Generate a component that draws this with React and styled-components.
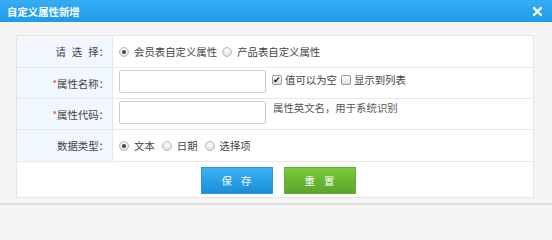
import React from 'react';
import styled, { createGlobalStyle } from 'styled-components';

const GlobalStyle = createGlobalStyle`
  html, body {
    margin: 0;
    padding: 0;
    background: #f5f5f5;
  }
  body {
    font-family: "Microsoft YaHei", "Noto Sans CJK SC", "Liberation Sans", sans-serif;
    font-size: 10.4px;
    color: #333;
  }
`;

const Dialog = styled.div`
  width: 552px;
  height: 205px;
  background: #f5f5f5;
  box-sizing: border-box;
  border-bottom: 2px solid #dcdcdc;
  display: flex;
  flex-direction: column;
`;

const TitleBar = styled.div`
  height: 22px;
  flex: none;
  background: linear-gradient(#36adf4, #1e9be8);
  display: flex;
  align-items: center;
  justify-content: space-between;
  padding: 0 9px 0 7px;
`;

const Title = styled.div`
  color: #fff;
  font-weight: bold;
  font-size: 10.4px;
`;

const Close = styled.svg`
  width: 11px;
  height: 11px;
`;

const Body = styled.div`
  padding: 13px 18px 0 16px;
`;

const Table = styled.div`
  background: #fff;
  border: 1px solid #e6e6e6;
  display: grid;
  grid-template-columns: 96px 1fr;
`;

const Label = styled.div`
  height: ${(p) => p.h}px;
  background: #f0f7fe;
  border-right: 1px solid #e2e8ee;
  border-top: ${(p) => (p.first ? 'none' : '1px solid #e8e8e8')};
  display: flex;
  align-items: center;
  justify-content: flex-end;
  padding-right: 3px;
  color: #444;
  white-space: pre;
`;

const Spaced = styled.span`
  letter-spacing: 6px;
`;

const Star = styled.span`
  color: #e4393c;
`;

const Cell = styled.div`
  height: ${(p) => p.h}px;
  border-top: ${(p) => (p.first ? 'none' : '1px solid #e8e8e8')};
  display: flex;
  align-items: ${(p) => (p.top ? 'flex-start' : 'center')};
  padding-left: 6px;
  color: #444;
`;

const Input = styled.input`
  width: 147px;
  height: 23px;
  box-sizing: border-box;
  border: 1px solid #ccc;
  border-radius: 2px;
  margin-top: 2px;
  outline: none;
  flex: none;
`;

const Option = styled.label`
  display: inline-flex;
  align-items: center;
  margin-right: ${(p) => p.mr || 4}px;
  white-space: nowrap;
`;

const RadioDot = styled.span`
  width: 10px;
  height: 10px;
  border-radius: 50%;
  border: 1px solid #bbb;
  background: radial-gradient(circle at 50% 35%, #fff, #d4d4d4);
  margin-right: 5px;
  display: inline-flex;
  align-items: center;
  justify-content: center;
  box-sizing: border-box;
  &::after {
    content: '';
    width: 4px;
    height: 4px;
    border-radius: 50%;
    background: ${(p) => (p.on ? '#444' : 'transparent')};
  }
`;

const Box = styled.span`
  width: 10px;
  height: 10px;
  border: 1px solid #999;
  border-radius: 2px;
  background: linear-gradient(#fff, #ddd);
  margin-right: 3px;
  box-sizing: border-box;
  display: inline-flex;
  align-items: center;
  justify-content: center;
  font-size: 9px;
  line-height: 1;
  color: #222;
`;

const Checks = styled.div`
  display: flex;
  margin: 4px 0 0 6px;
`;

const Hint = styled.span`
  margin-left: 7px;
  margin-top: 1px;
  color: #555;
`;

const ButtonRow = styled.div`
  grid-column: 1 / 3;
  height: 35px;
  border-top: 1px solid #e8e8e8;
  display: flex;
  align-items: center;
  justify-content: center;
  gap: 11px;
  padding-left: 6px;
`;

const Button = styled.button`
  width: 72px;
  height: 27px;
  margin-top: 1px;
  border: 1px solid ${(p) => (p.green ? '#62b02f' : '#2a98dd')};
  background: ${(p) =>
    p.green
      ? 'linear-gradient(#79c93a, #5ba62a)'
      : 'linear-gradient(#3db1f3, #1a8fd8)'};
  color: #fff;
  font-family: inherit;
  font-size: 10.4px;
  letter-spacing: 9px;
  text-indent: 9px;
  padding: 0;
`;

const Radio = ({ on, children, mr }) => (
  <Option mr={mr}>
    <RadioDot on={on} />
    {children}
  </Option>
);

const Check = ({ on, children }) => (
  <Option mr={4}>
    <Box>{on ? '✔' : ''}</Box>
    {children}
  </Option>
);

export default function App() {
  return (
    <>
      <GlobalStyle />
      <Dialog>
        <TitleBar>
          <Title>自定义属性新增</Title>
          <Close viewBox="0 0 12 12">
            <path d="M1.5 1.5 L10.5 10.5 M10.5 1.5 L1.5 10.5" stroke="#fff" strokeWidth="2.4" />
          </Close>
        </TitleBar>
        <Body>
          <Table>
            <Label h={31} first>
              <Spaced>请选</Spaced>择：
            </Label>
            <Cell h={31} first>
              <Radio on mr={5}>会员表自定义属性</Radio>
              <Radio>产品表自定义属性</Radio>
            </Cell>

            <Label h={30}>
              <Star>*</Star>属性名称：
            </Label>
            <Cell h={30} top>
              <Input />
              <Checks>
                <Check on>值可以为空</Check>
                <Check>显示到列表</Check>
              </Checks>
            </Cell>

            <Label h={30}>
              <Star>*</Star>属性代码：
            </Label>
            <Cell h={30} top>
              <Input />
              <Hint>属性英文名，用于系统识别</Hint>
            </Cell>

            <Label h={31}>数据类型：</Label>
            <Cell h={31}>
              <Radio on mr={7}>文本</Radio>
              <Radio mr={7}>日期</Radio>
              <Radio>选择项</Radio>
            </Cell>

            <ButtonRow>
              <Button>保存</Button>
              <Button green>重置</Button>
            </ButtonRow>
          </Table>
        </Body>
      </Dialog>
    </>
  );
}
